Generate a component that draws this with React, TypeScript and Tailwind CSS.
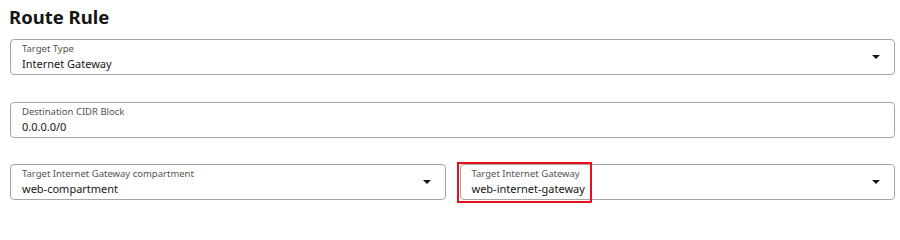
import React from "react";

function Caret() {
  return (
    <svg width="8" height="4" viewBox="0 0 8 4" className="shrink-0">
      <path d="M0 0 H8 L4 4 Z" fill="#161513" />
    </svg>
  );
}

function Field({
  label,
  value,
  select,
  highlight,
}: {
  label: string;
  value: string;
  select?: boolean;
  highlight?: boolean;
}) {
  return (
    <div className="relative flex h-[36px] items-center rounded-[4px] border border-[#a8a6a3] bg-white pl-[11px] pr-[14px]">
      <div className="flex flex-1 flex-col">
        <span className="text-[9.5px] leading-[12px] text-[#55524f]">{label}</span>
        <span className="mt-[1px] text-[11px] leading-[15px] text-[#161513]">{value}</span>
      </div>
      {select && <Caret />}
      {highlight && (
        <div className="pointer-events-none absolute left-[-4px] top-[-3px] h-[41px] w-[135px] border-2 border-[#e8101a]" />
      )}
    </div>
  );
}

export default function App() {
  return (
    <div
      className="h-[207px] w-[900px] bg-white pl-[10px] pr-[5px]"
      style={{ fontFamily: '"Noto Sans", "Open Sans", sans-serif' }}
    >
      <h1 className="ml-[-1px] pt-[5px] text-[18.5px] font-bold leading-[24px] text-[#161513]">
        Route Rule
      </h1>
      <div className="mt-[10px] flex flex-col gap-[27px]">
        <Field label="Target Type" value="Internet Gateway" select />
        <Field label="Destination CIDR Block" value="0.0.0.0/0" />
        <div className="mt-[-1px] grid grid-cols-2 gap-[14px]">
          <Field label="Target Internet Gateway compartment" value="web-compartment" select />
          <Field label="Target Internet Gateway" value="web-internet-gateway" select highlight />
        </div>
      </div>
    </div>
  );
}
